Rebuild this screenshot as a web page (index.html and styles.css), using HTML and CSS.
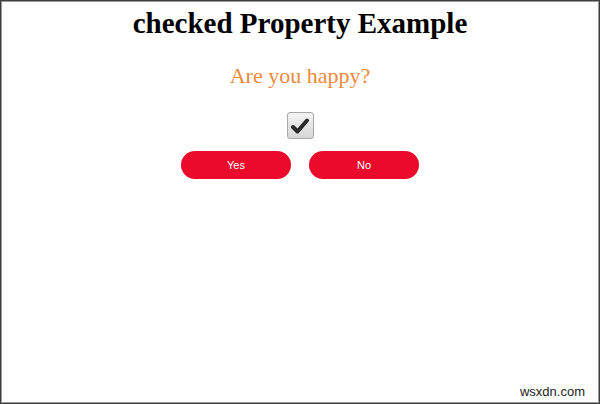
FILE: index.html
```html
<!DOCTYPE html>
<html>
<head>
<meta charset="utf-8">
<link rel="stylesheet" href="styles.css">
</head>
<body>
<div class="frame">
  <h1 class="title">checked Property Example</h1>
  <p class="question">Are you happy?</p>
  <div class="check">
    <svg width="20" height="18" viewBox="0 0 20 18"><path d="M3 10 L7.5 14.5 L17 3.5" fill="none" stroke="#2a2a2a" stroke-width="4" stroke-linecap="round" stroke-linejoin="round"/></svg>
  </div>
  <div class="buttons">
    <button class="btn">Yes</button>
    <button class="btn">No</button>
  </div>
  <div class="spacer"></div>
  <div class="mark">wsxdn.com</div>
</div>
</body>
</html>
```
FILE: styles.css
```css
html, body {
  margin: 0;
  padding: 0;
  background: #fff;
}
.frame {
  width: 600px;
  height: 404px;
  box-sizing: border-box;
  border: 1px solid #3c3c3c;
  box-shadow: inset 0 0 0 1px #9a9a9a;
  display: flex;
  flex-direction: column;
  align-items: center;
  font-family: "Liberation Serif", "Times New Roman", serif;
}
.title {
  margin: 6px 0 0;
  font-size: 29px;
  line-height: 33px;
  font-weight: bold;
  color: #000;
}
.question {
  margin: 23px 0 0;
  font-size: 22px;
  line-height: 26px;
  color: #ee8a3c;
}
.check {
  margin-top: 23px;
  width: 27px;
  height: 27px;
  box-sizing: border-box;
  border: 1px solid #a9a9a9;
  border-radius: 3px;
  background: linear-gradient(#f4f4f4, #d6d6d6);
  display: flex;
  align-items: center;
  justify-content: center;
}
.buttons {
  margin-top: 12px;
  display: flex;
  gap: 18px;
}
.btn {
  width: 110px;
  height: 28px;
  border: none;
  border-radius: 14px;
  background: #ec0a2c;
  color: #fff;
  font-family: "Liberation Sans", Arial, sans-serif;
  font-size: 11px;
  padding: 0;
}
.spacer {
  flex: 1;
}
.mark {
  align-self: flex-end;
  margin: 0 14px 4px 0;
  font-family: "Liberation Sans", Arial, sans-serif;
  font-size: 13px;
  color: #222;
}
```
